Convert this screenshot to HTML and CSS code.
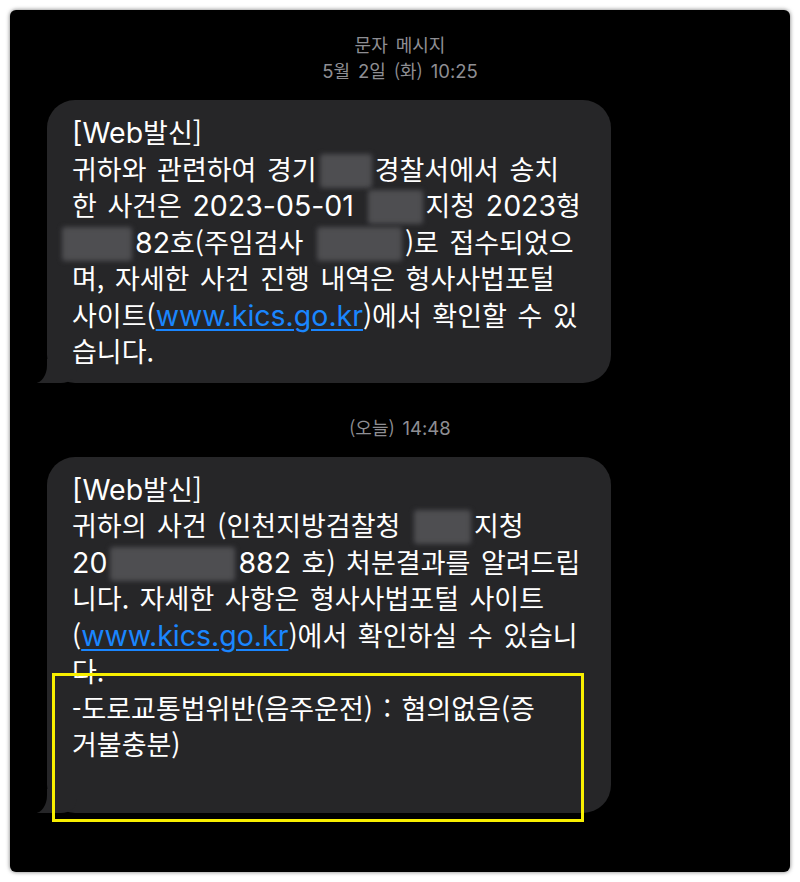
FILE: index.html
```html
<!DOCTYPE html>
<html lang="ko">
<head>
<meta charset="utf-8">
<title>문자 메시지</title>
<link rel="stylesheet" href="styles.css">
</head>
<body>
<div class="frame">
  <div class="header">
    <div>문자 메시지</div>
    <div><span class="hl">5</span>월 <span class="hl">2</span>일 (화) <span class="hl">10:25</span></div>
  </div>

  <div class="bubble">
    <div class="ln"><span class="lat">[Web</span>발신]</div>
    <div class="ln">귀하와 관련하여 경기<span class="blur w52"></span>경찰서에서 송치</div>
    <div class="ln">한 사건은 <span class="lat">2023-05-01</span> <span class="blur w55"></span>지청 <span class="lat">2023</span>형</div>
    <div class="ln"><span class="blur w70 pull"></span><span class="lat">82</span>호(주임검사 <span class="blur w85"></span>)로 접수되었으</div>
    <div class="ln">며, 자세한 사건 진행 내역은 형사사법포털</div>
    <div class="ln">사이트(<span class="lat link">www.kics.go.kr</span>)에서 확인할 수 있</div>
    <div class="ln">습니다.</div>
  </div>

  <div class="stamp">(오늘) <span class="hl">14:48</span></div>

  <div class="bubble tall">
    <div class="ln"><span class="lat">[Web</span>발신]</div>
    <div class="ln">귀하의 사건 (인천지방검찰청 <span class="blur w57"></span>지청</div>
    <div class="ln"><span class="lat">20</span><span class="blur w125"></span><span class="lat">882</span> 호) 처분결과를 알려드립</div>
    <div class="ln">니다. 자세한 사항은 형사사법포털 사이트</div>
    <div class="ln">(<span class="lat link">www.kics.go.kr</span>)에서 확인하실 수 있습니</div>
    <div class="ln">다.</div>
    <div class="ln">-도로교통법위반(음주운전) : 혐의없음(증</div>
    <div class="ln">거불충분)</div>
    <div class="mark"></div>
  </div>
</div>
</body>
</html>
```

FILE: styles.css
```css
html, body {
  margin: 0;
  padding: 0;
  background: #ffffff;
}

body {
  width: 800px;
  height: 882px;
  padding: 10px;
  box-sizing: border-box;
}

.frame {
  width: 780px;
  height: 862px;
  box-sizing: border-box;
  background: #000000;
  border-radius: 6px;
  box-shadow: 0 0 4px rgba(0, 0, 0, 0.55);
  padding-top: 21px;
  overflow: hidden;
  font-family: "Noto Sans CJK KR", "Liberation Sans", sans-serif;
}

.header {
  text-align: center;
  color: #8e8e93;
  font-size: 18px;
  line-height: 26px;
  word-spacing: 3px;
}

.hl {
  font-family: Inter, "Noto Sans CJK KR", sans-serif;
  font-size: 18.5px;
}

.stamp {
  margin-top: 31px;
  text-align: center;
  color: #8e8e93;
  font-size: 18px;
  line-height: 26px;
  word-spacing: 3px;
}

.bubble {
  position: relative;
  margin: 16px 0 0 37px;
  width: 564px;
  box-sizing: border-box;
  padding: 14px 10px 13px 25px;
  background: #262628;
  border-radius: 28px;
  color: #ffffff;
  font-size: 27px;
  line-height: 36.5px;
  word-spacing: 3px;
}

.stamp + .bubble {
  margin-top: 16px;
}

.bubble.tall {
  padding-bottom: 50px;
}

.bubble::before {
  content: "";
  position: absolute;
  left: -10px;
  bottom: 0;
  width: 40px;
  height: 24px;
  background: #262628;
  border-bottom-right-radius: 16px 14px;
}

.bubble::after {
  content: "";
  position: absolute;
  left: -22px;
  bottom: 0;
  width: 22px;
  height: 26px;
  background: #000000;
  border-bottom-right-radius: 12px 18px;
}

.ln {
  position: relative;
  z-index: 1;
  height: 36.5px;
  white-space: nowrap;
}

.lat {
  font-family: Inter, "Liberation Sans", sans-serif;
  font-size: 28.5px;
  line-height: 1;
  word-spacing: 0;
}

.link {
  color: #1a86ff;
  text-decoration: underline;
  text-decoration-thickness: 1.5px;
  text-underline-offset: 3px;
}

.blur {
  display: inline-block;
  height: 34px;
  vertical-align: -8px;
  background: #4e4e51;
  border-radius: 3px;
  filter: blur(2.5px);
  margin: 0 3px;
}

.blur.pull {
  margin-left: -10px;
}

.w52 { width: 52px; }
.w55 { width: 55px; }
.w57 { width: 57px; }
.w70 { width: 70px; }
.w85 { width: 85px; }
.w125 { width: 125px; }

.mark {
  position: absolute;
  left: 5px;
  top: 216px;
  width: 532px;
  height: 149px;
  box-sizing: border-box;
  border: 3px solid #f8ef00;
  z-index: 2;
}
```
